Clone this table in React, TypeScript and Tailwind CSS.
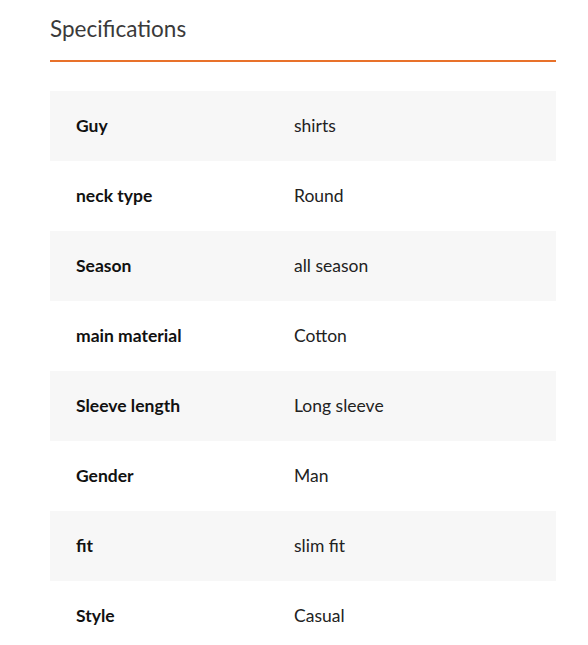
const specs: [string, string][] = [
  ["Guy", "shirts"],
  ["neck type", "Round"],
  ["Season", "all season"],
  ["main material", "Cotton"],
  ["Sleeve length", "Long sleeve"],
  ["Gender", "Man"],
  ["fit", "slim fit"],
  ["Style", "Casual"],
];

export default function App() {
  return (
    <div className="min-h-screen bg-white font-['Lato','Liberation_Sans',sans-serif]">
      <div className="ml-[50px] w-[506px]">
        {/* Title */}
        <h2 className="border-b-2 border-[#e8712a] pt-[16px] pb-[18px] text-[22.5px] leading-[26px] text-[#3a3a3a]">
          Specifications
        </h2>

        {/* Table */}
        <div className="mt-[29px]">
          {specs.map(([label, value], i) => (
            <div
              key={label}
              className={`flex h-[70px] items-center text-[17.5px] text-[#111] ${
                i % 2 === 0 ? "bg-[#f7f7f7]" : "bg-white"
              }`}
            >
              <div className="w-[244px] pl-[26px] font-bold">{label}</div>
              <div className="flex-1 text-[#222]">{value}</div>
            </div>
          ))}
        </div>
      </div>
    </div>
  );
}
